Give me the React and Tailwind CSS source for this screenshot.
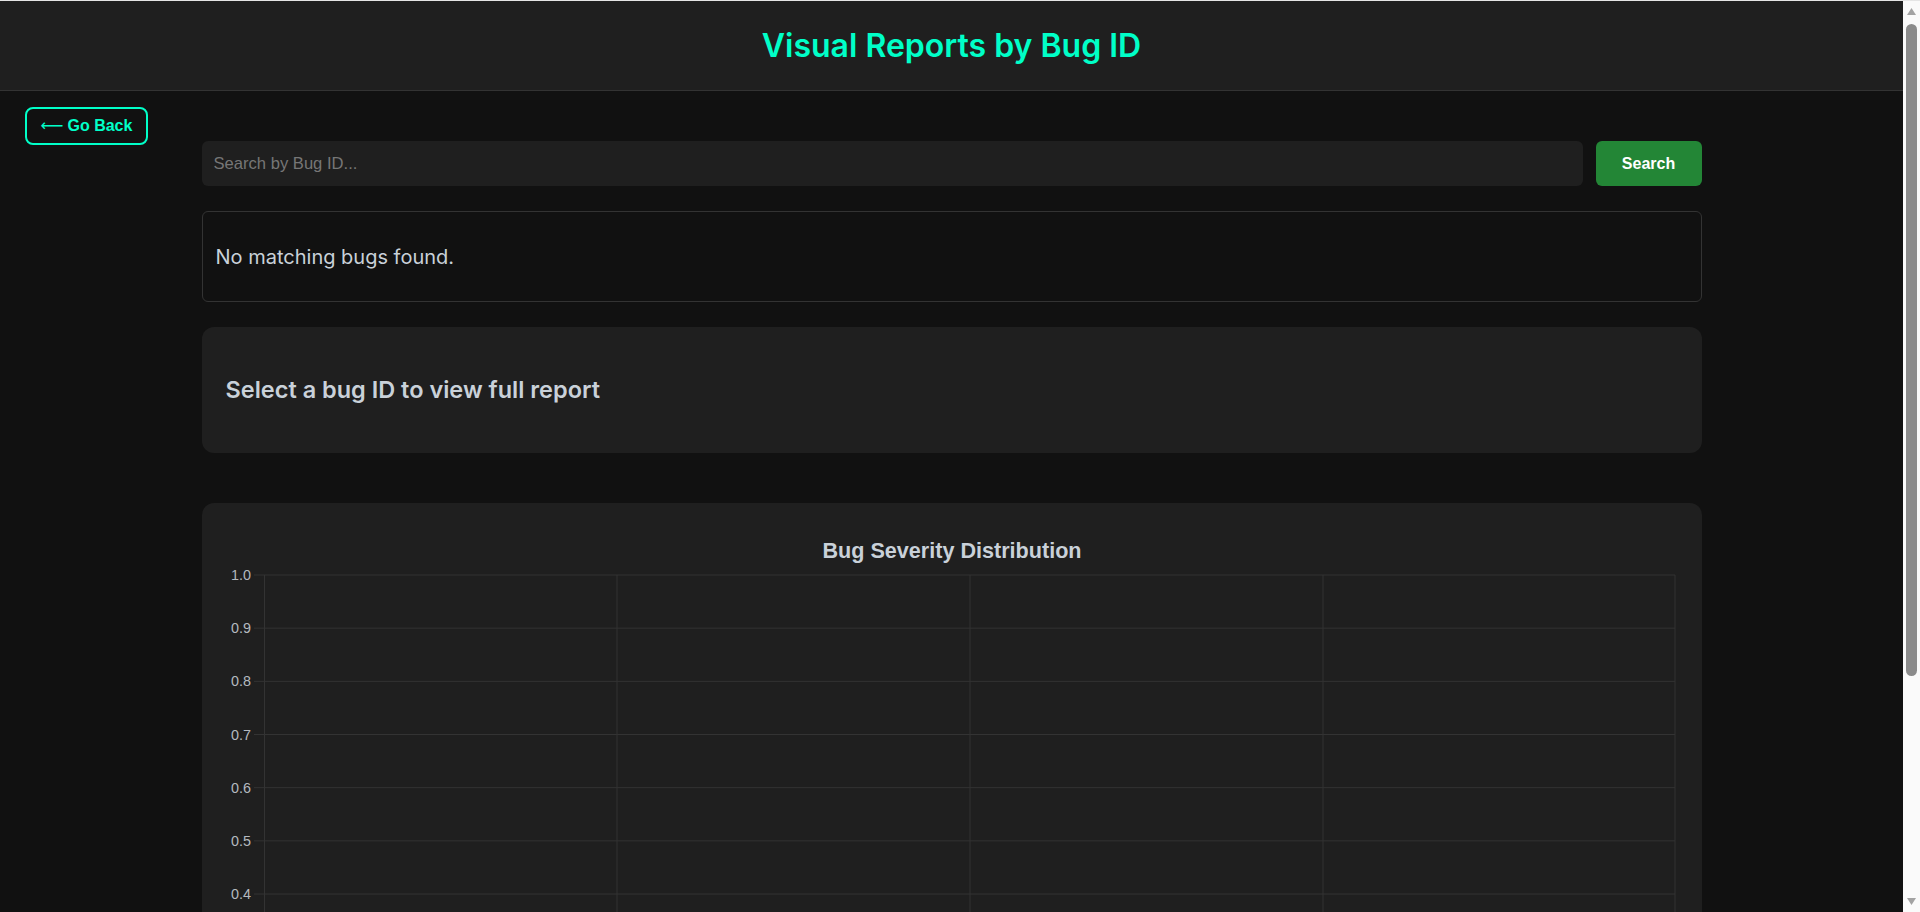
import React from "react";

const gridTop = 52;
const step = 53.17;
const vLines = [42.5, 395, 748, 1101, 1453];
const yTicks = ["1.0", "0.9", "0.8", "0.7", "0.6", "0.5", "0.4", "0.3", "0.2", "0.1", "0"];
const xLabels = ["Low", "Medium", "High", "Critical"];

function Chart() {
  const bottom = gridTop + step * 10;
  return (
    <svg width="1460" height="620" className="block" style={{ fontFamily: '"Liberation Sans", Arial, sans-serif' }}>
      <text x="730" y="35" textAnchor="middle" fill="#c9d1d9" fontSize="21.6" fontWeight="700">
        Bug Severity Distribution
      </text>
      {yTicks.map((t, i) => {
        const y = gridTop + step * i;
        return (
          <g key={t}>
            <line x1="32" x2="1453" y1={y} y2={y} stroke="#333333" strokeWidth="1" />
            <text x="29" y={y + 5} textAnchor="end" fill="#b4b9bf" fontSize="14.4">
              {t}
            </text>
          </g>
        );
      })}
      {vLines.map((x) => (
        <line key={x} x1={x} x2={x} y1={gridTop} y2={bottom + 8} stroke="#333333" strokeWidth="1" />
      ))}
      {xLabels.map((l, i) => (
        <text key={l} x={(vLines[i] + vLines[i + 1]) / 2} y={bottom + 26} textAnchor="middle" fill="#b4b9bf" fontSize="14.4">
          {l}
        </text>
      ))}
    </svg>
  );
}

function Scrollbar() {
  return (
    <div className="flex h-full w-[17px] shrink-0 flex-col items-center bg-[#fafafa]">
      <svg width="17" height="17" className="block shrink-0">
        <polygon points="4,14 13,14 8.5,7" fill="#a3a3a3" />
      </svg>
      <div className="mt-[6px] h-[652px] w-[11px] rounded-full bg-[#8b8b8b]" />
      <div className="flex-1" />
      <svg width="17" height="17" className="block shrink-0">
        <polygon points="4,3 13,3 8.5,10" fill="#a3a3a3" />
      </svg>
    </div>
  );
}

export default function App() {
  return (
    <div className="flex h-screen overflow-hidden border-t border-[#e5e5e5] bg-[#111111]" style={{ fontFamily: "Inter, sans-serif" }}>
      <div className="relative min-w-0 flex-1 overflow-hidden">
        <header className="flex h-[90px] items-center justify-center border-b border-[#333333] bg-[#1f1f1f]">
          <h1 className="text-[32px] font-semibold leading-none text-[#00ffc8]">Visual Reports by Bug ID</h1>
        </header>

        <button className="absolute left-[25px] top-[106px] flex h-[38px] w-[123px] items-center justify-center gap-[4px] rounded-lg border-2 border-[#00ffc8] font-['Liberation_Sans',Arial,sans-serif] text-[16px] font-bold text-[#00ffc8]">
          <span className="font-['DejaVu_Sans',sans-serif] font-normal">⟵</span>
          <span>Go Back</span>
        </button>

        <main className="mx-auto max-w-[1500px] pb-[50px] pt-[50px]">
          <div className="flex gap-[13px]">
            <input
              type="text"
              placeholder="Search by Bug ID..."
              className="h-[45px] flex-1 rounded-md bg-[#1f1f1f] px-3 font-['Liberation_Sans',Arial,sans-serif] text-[16.6px] text-[#c9d1d9] outline-none placeholder:text-[#767676]"
            />
            <button className="h-[45px] w-[106px] rounded-md bg-[#238636] font-['Liberation_Sans',Arial,sans-serif] text-[16px] font-bold text-white">
              Search
            </button>
          </div>

          <div className="mt-[25px] flex h-[91px] items-center rounded-md border border-[#333333] px-[13px]">
            <p className="text-[20px] text-[#c9d1d9]">No matching bugs found.</p>
          </div>

          <div className="mt-[25px] flex h-[126px] items-center rounded-xl bg-[#1f1f1f] px-6">
            <h2 className="text-[23.5px] font-semibold text-[#c9d1d9]">Select a bug ID to view full report</h2>
          </div>

          <div className="mt-[50px] rounded-xl bg-[#1f1f1f] p-5">
            <Chart />
          </div>
        </main>
      </div>
      <Scrollbar />
    </div>
  );
}
